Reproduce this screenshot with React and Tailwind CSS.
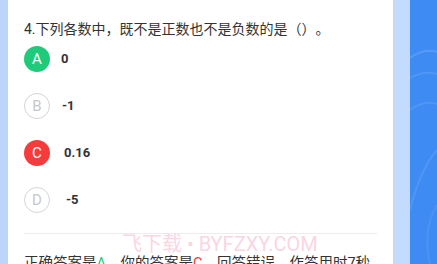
import React from "react";

const options = [
  { key: "A", text: "0", state: "correct", gap: "ml-[11px]" },
  { key: "B", text: "-1", state: "none", gap: "ml-[12px]" },
  { key: "C", text: "0.16", state: "wrong", gap: "ml-[14px]" },
  { key: "D", text: "-5", state: "none", gap: "ml-[16px]" },
];

const Badge = ({ letter, state }) => {
  if (state === "correct") {
    return (
      <div className="w-[26px] h-[26px] rounded-full bg-[#1fcb7b] text-white flex items-center justify-center text-[15px]">
        {letter}
      </div>
    );
  }
  if (state === "wrong") {
    return (
      <div className="w-[26px] h-[26px] rounded-full bg-[#f53b3b] text-white flex items-center justify-center text-[15px]">
        {letter}
      </div>
    );
  }
  return (
    <div className="w-[26px] h-[26px] rounded-full border border-[#d4d4d4] text-[#c8c8c8] flex items-center justify-center text-[15px]">
      {letter}
    </div>
  );
};

export default function App() {
  return (
    <div
      className="flex w-[437px] h-[264px] overflow-hidden bg-white [text-spacing-trim:space-all]"
      style={{ fontFamily: 'Roboto, "Noto Sans CJK SC", sans-serif' }}
    >
      <div className="w-[8px] bg-[#bcd6fb]" />

      <div className="relative flex-1 bg-white flex flex-col">
        <div className="h-[3px] bg-[#f3f4f6]" />
        <div className="px-[16px] pt-[19px]">
          <p className="text-[14px] leading-[20px] text-[#333]">
            4.下列各数中，既不是正数也不是负数的是（）。
          </p>

          <div className="mt-[7px] flex flex-col gap-[21px]">
            {options.map((o) => (
              <div key={o.key} className="flex items-center h-[26px]">
                <Badge letter={o.key} state={o.state} />
                <span className={`${o.gap} text-[13px] font-bold text-[#333]`}>
                  {o.text}
                </span>
              </div>
            ))}
          </div>

          <div className="mt-[20px] h-px bg-[#ececec]" />

          <p className="mt-[19px] text-[14.5px] leading-[22px] text-[#333] whitespace-nowrap">
            正确答案是<span className="text-[#1fcb7b]">A</span>，你的答案是
            <span className="text-[#f53b3b]">C</span>，回答错误，作答用时7秒
          </p>
        </div>

        <div className="absolute left-[114px] top-[232px] text-[20px] leading-[24px] text-[#f8cddd] opacity-80 whitespace-nowrap">
          飞下载 • BYFZXY.COM
        </div>
      </div>

      <div className="w-[17px] bg-[#c3dbfc]" />
      <div className="relative w-[27px] bg-[#3d8bf3] overflow-hidden">
        <svg width="27" height="264" className="absolute inset-0">
          <path d="M0 58 Q14 48 27 52" stroke="#ffffff" strokeOpacity="0.14" fill="none" strokeWidth="2" />
          <path d="M0 78 Q14 70 27 74" stroke="#ffffff" strokeOpacity="0.1" fill="none" strokeWidth="2" />
          <path d="M0 110 Q14 100 27 104" stroke="#ffffff" strokeOpacity="0.1" fill="none" strokeWidth="2" />
          <path d="M0 210 Q10 170 27 150" stroke="#ffffff" strokeOpacity="0.1" fill="none" strokeWidth="2" />
          <path d="M20 264 Q12 230 27 205" stroke="#ffffff" strokeOpacity="0.08" fill="none" strokeWidth="2" />
        </svg>
      </div>
    </div>
  );
}
